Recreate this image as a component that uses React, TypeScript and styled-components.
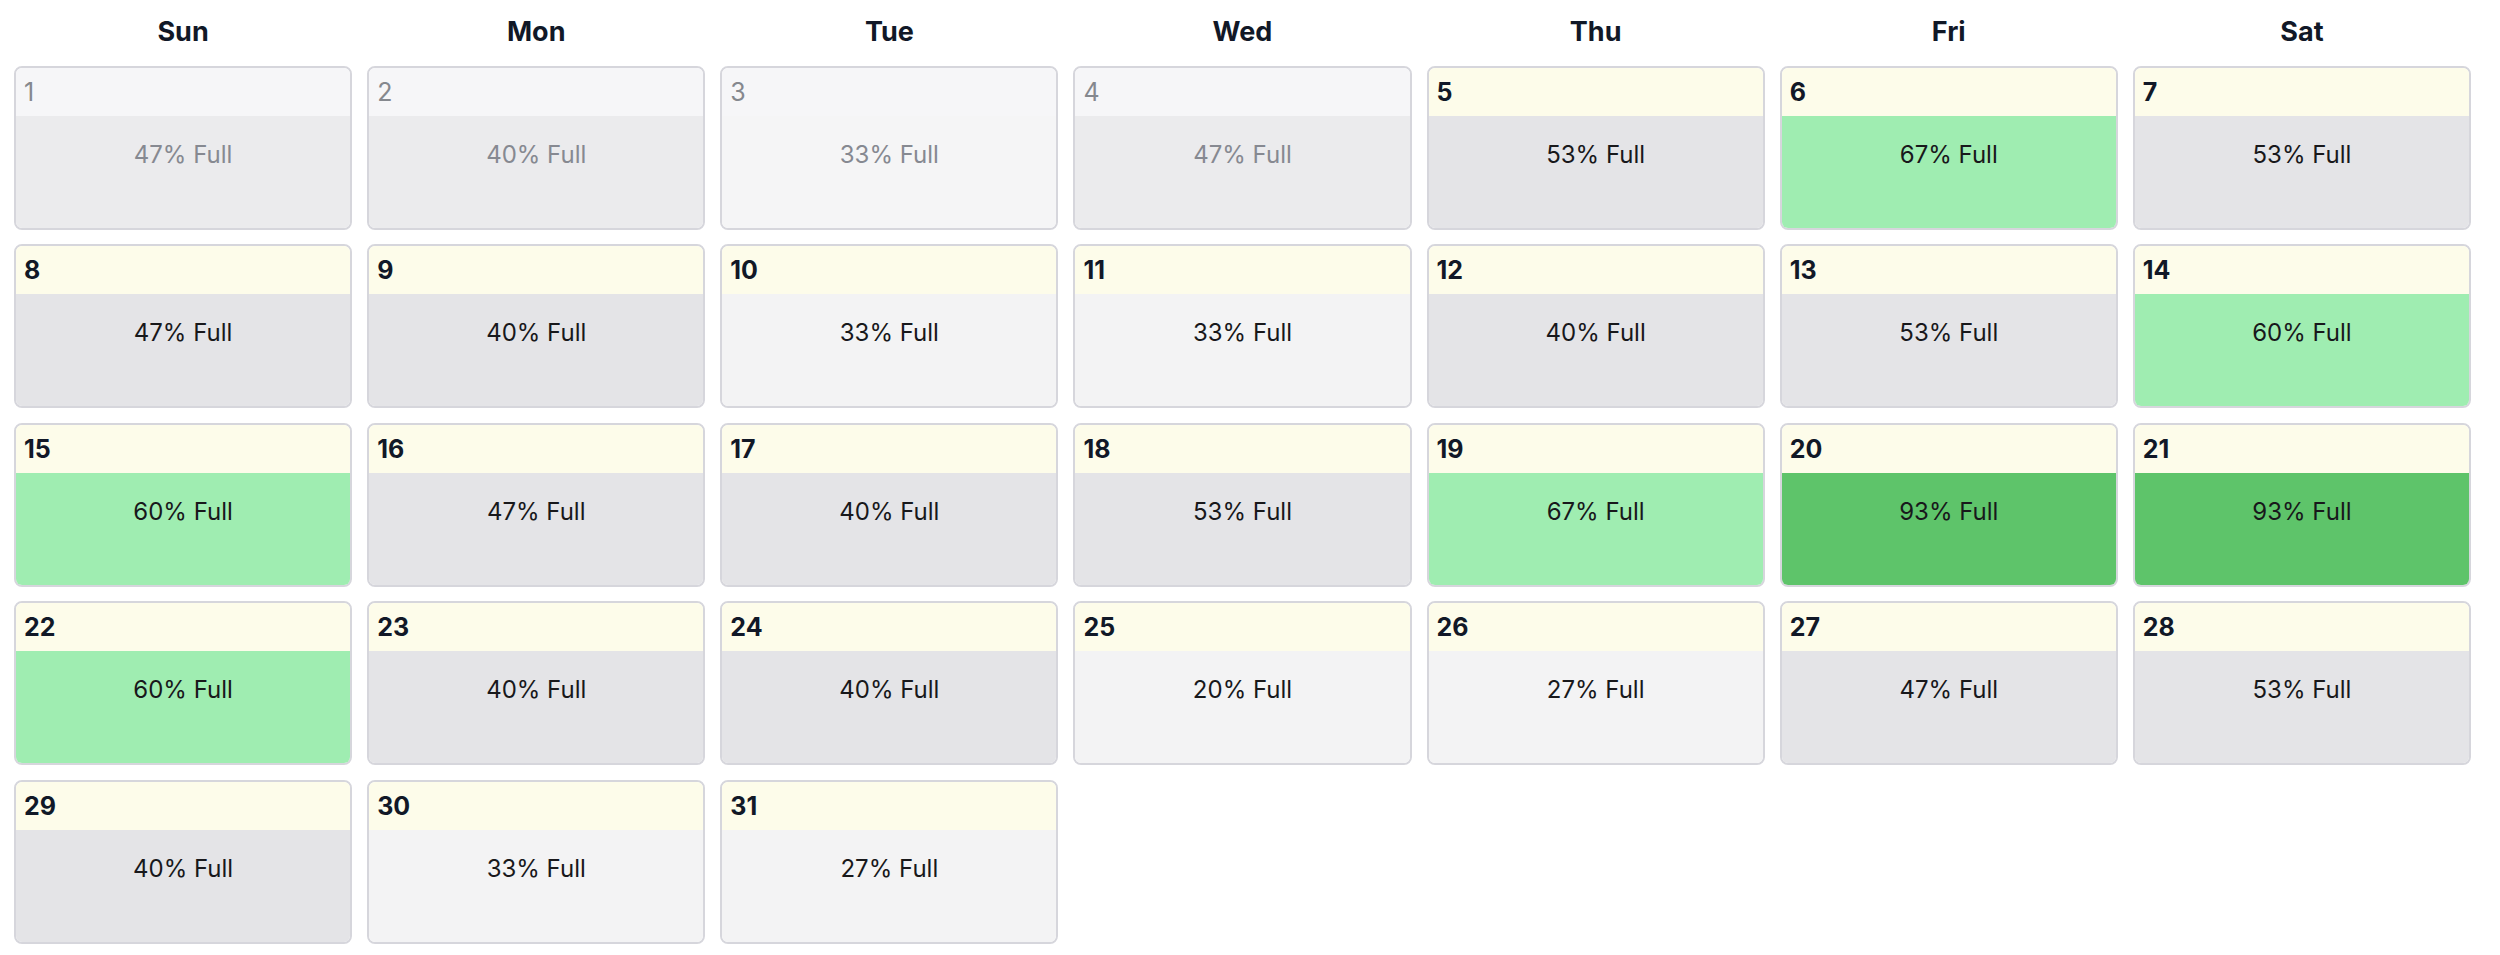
import React from "react";
import styled, { createGlobalStyle } from "styled-components";

const GlobalStyle = createGlobalStyle`
  html, body { margin: 0; padding: 0; background: #ffffff; }
  body { font-family: Inter, "Noto Sans", "Liberation Sans", sans-serif; color: #18181b; }
`;

type Tone = "light" | "gray" | "green" | "deep";

const bodyColors: Record<Tone, string> = {
  light: "#f3f3f4",
  gray: "#e4e4e7",
  green: "#9fedb1",
  deep: "#5ec46a",
};

const Page = styled.div`
  padding: 0 29px 0 14px;
`;

const Grid = styled.div`
  display: grid;
  grid-template-columns: repeat(7, 1fr);
  column-gap: 15px;
  row-gap: 14.5px;
`;

const DayName = styled.div`
  height: 51px;
  display: flex;
  align-items: center;
  justify-content: center;
  font-size: 27px;
  font-weight: 700;
  color: #111827;
  padding-top: 12px;
  box-sizing: border-box;
`;

const Cell = styled.div`
  height: 164px;
  box-sizing: border-box;
  border: 2px solid #d6d6dc;
  border-radius: 8px;
  overflow: hidden;
  display: flex;
  flex-direction: column;
`;

const CellHead = styled.div<{ $muted?: boolean }>`
  height: 48px;
  flex: none;
  display: flex;
  align-items: center;
  padding-left: 8px;
  background: ${(p) => (p.$muted ? "#f6f6f8" : "#fdfcea")};
  font-size: 25px;
  font-weight: ${(p) => (p.$muted ? 400 : 700)};
  color: ${(p) => (p.$muted ? "#85888e" : "#111827")};
`;

const CellBody = styled.div<{ $bg: string; $muted?: boolean }>`
  flex: 1;
  background: ${(p) => p.$bg};
  display: flex;
  justify-content: center;
  padding-top: 24px;
  font-size: 24px;
  font-weight: 400;
  color: ${(p) => (p.$muted ? "#868991" : "#18181b")};
`;

const Blank = styled.div``;

const days = ["Sun", "Mon", "Tue", "Wed", "Thu", "Fri", "Sat"];

const pcts = [
  47, 40, 33, 47, 53, 67, 53, 47, 40, 33, 33, 40, 53, 60, 60, 47, 40, 53, 67, 93, 93,
  60, 40, 40, 20, 27, 47, 53, 40, 33, 27,
];

const toneFor = (p: number): Tone => {
  if (p >= 80) return "deep";
  if (p >= 60) return "green";
  if (p >= 40) return "gray";
  return "light";
};

const mutedBody = (p: number) => (p >= 40 ? "#ebebed" : "#f5f5f6");

export default function App() {
  return (
    <Page>
      <GlobalStyle />
      <Grid>
        {days.map((d) => (
          <DayName key={d}>{d}</DayName>
        ))}
        {pcts.map((p, i) => {
          const day = i + 1;
          const muted = day <= 4;
          const bg = muted ? mutedBody(p) : bodyColors[toneFor(p)];
          return (
            <Cell key={day}>
              <CellHead $muted={muted}>{day}</CellHead>
              <CellBody $bg={bg} $muted={muted}>
                {p}% Full
              </CellBody>
            </Cell>
          );
        })}
        <Blank />
      </Grid>
    </Page>
  );
}
